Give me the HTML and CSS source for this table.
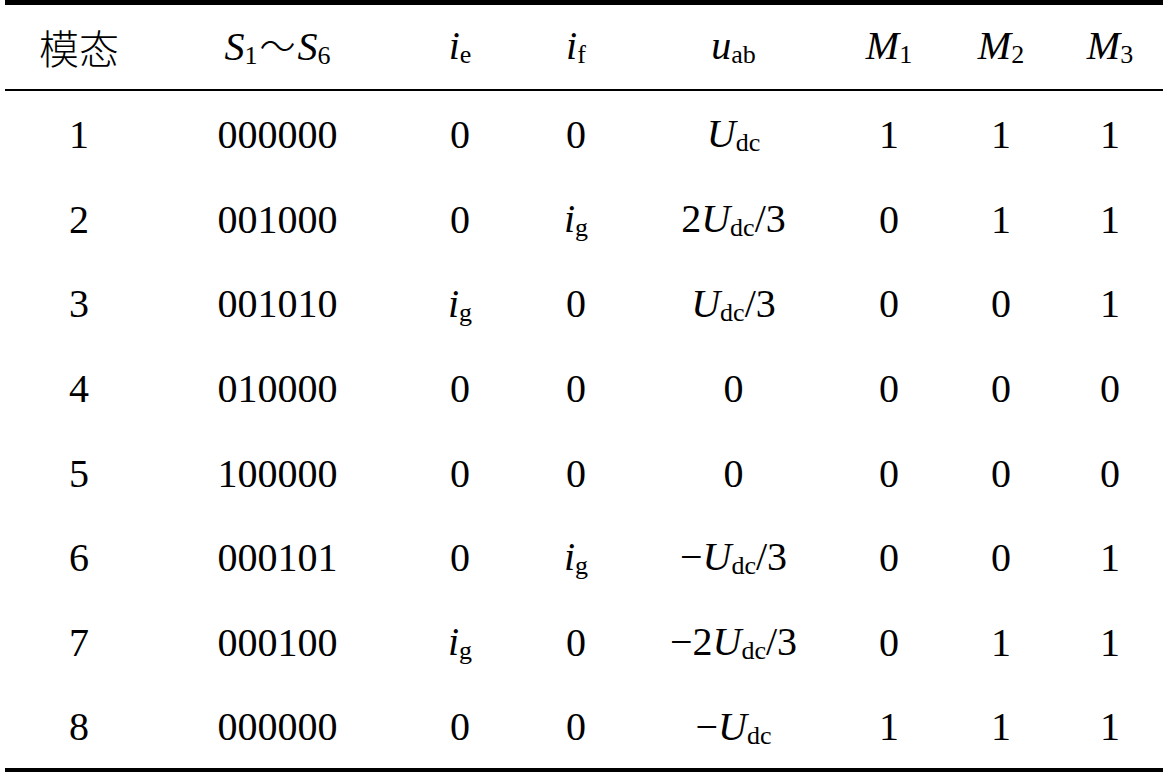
FILE: index.html
```html
<!DOCTYPE html>
<html lang="zh-CN">
<head>
    <meta charset="UTF-8">
    <meta name="viewport" content="width=device-width, initial-scale=1.0">
    <title>开关模态表</title>
    <link rel="stylesheet" href="styles.css">
</head>
<body>
    <table class="mode-table">
        <colgroup>
            <col class="c-mode">
            <col class="c-switch">
            <col class="c-ie">
            <col class="c-if">
            <col class="c-uab">
            <col class="c-m">
            <col class="c-m">
            <col class="c-m3">
        </colgroup>
        <thead>
            <tr>
                <th class="cjk">模态</th>
                <th><i>S</i><span class="sub">1</span><span class="cjk tilde">～</span><i>S</i><span class="sub">6</span></th>
                <th><i>i</i><span class="sub">e</span></th>
                <th><i>i</i><span class="sub">f</span></th>
                <th><i>u</i><span class="sub">ab</span></th>
                <th><i>M</i><span class="sub">1</span></th>
                <th><i>M</i><span class="sub">2</span></th>
                <th><i>M</i><span class="sub">3</span></th>
            </tr>
        </thead>
        <tbody>
            <tr>
                <td>1</td><td>000000</td><td>0</td><td>0</td>
                <td><i>U</i><span class="sub">dc</span></td>
                <td>1</td><td>1</td><td>1</td>
            </tr>
            <tr>
                <td>2</td><td>001000</td><td>0</td><td><i>i</i><span class="sub">g</span></td>
                <td>2<i>U</i><span class="sub">dc</span>/3</td>
                <td>0</td><td>1</td><td>1</td>
            </tr>
            <tr>
                <td>3</td><td>001010</td><td><i>i</i><span class="sub">g</span></td><td>0</td>
                <td><i>U</i><span class="sub">dc</span>/3</td>
                <td>0</td><td>0</td><td>1</td>
            </tr>
            <tr>
                <td>4</td><td>010000</td><td>0</td><td>0</td>
                <td>0</td>
                <td>0</td><td>0</td><td>0</td>
            </tr>
            <tr>
                <td>5</td><td>100000</td><td>0</td><td>0</td>
                <td>0</td>
                <td>0</td><td>0</td><td>0</td>
            </tr>
            <tr>
                <td>6</td><td>000101</td><td>0</td><td><i>i</i><span class="sub">g</span></td>
                <td>&minus;<i>U</i><span class="sub">dc</span>/3</td>
                <td>0</td><td>0</td><td>1</td>
            </tr>
            <tr>
                <td>7</td><td>000100</td><td><i>i</i><span class="sub">g</span></td><td>0</td>
                <td>&minus;2<i>U</i><span class="sub">dc</span>/3</td>
                <td>0</td><td>1</td><td>1</td>
            </tr>
            <tr>
                <td>8</td><td>000000</td><td>0</td><td>0</td>
                <td>&minus;<i>U</i><span class="sub">dc</span></td>
                <td>1</td><td>1</td><td>1</td>
            </tr>
        </tbody>
    </table>
</body>
</html>
```
FILE: styles.css
```css
body {
    margin: 0;
    padding: 0;
    background: #fff;
    color: #000;
    font-family: "Liberation Serif", "Times New Roman", serif;
}
.mode-table {
    margin-left: 5px;
    width: 1158px;
    table-layout: fixed;
    border-collapse: separate;
    border-spacing: 0;
    font-size: 40px;
}
.c-mode { width: 148px; }
.c-switch { width: 249px; }
.c-ie { width: 116px; }
.c-if { width: 116px; }
.c-uab { width: 199px; }
.c-m { width: 112px; }
.c-m3 { width: 106px; }

th, td {
    padding: 0;
    text-align: center;
    vertical-align: middle;
    font-weight: normal;
    white-space: nowrap;
    line-height: 1;
}
thead th {
    height: 84px;
    border-top: 5px solid #000;
    border-bottom: 2px solid #000;
}
tbody td {
    height: 80.6px;
    padding-top: 4px;
}
tbody tr:last-child td {
    border-bottom: 4px solid #000;
}
i {
    font-style: italic;
}
.sub {
    font-size: 0.65em;
    vertical-align: -0.14em;
    font-style: normal;
}
.cjk {
    font-family: "Noto Sans CJK SC", sans-serif;
    font-weight: 300;
}
.tilde {
    font-size: 0.9em;
    margin: 0 2px;
}
```
